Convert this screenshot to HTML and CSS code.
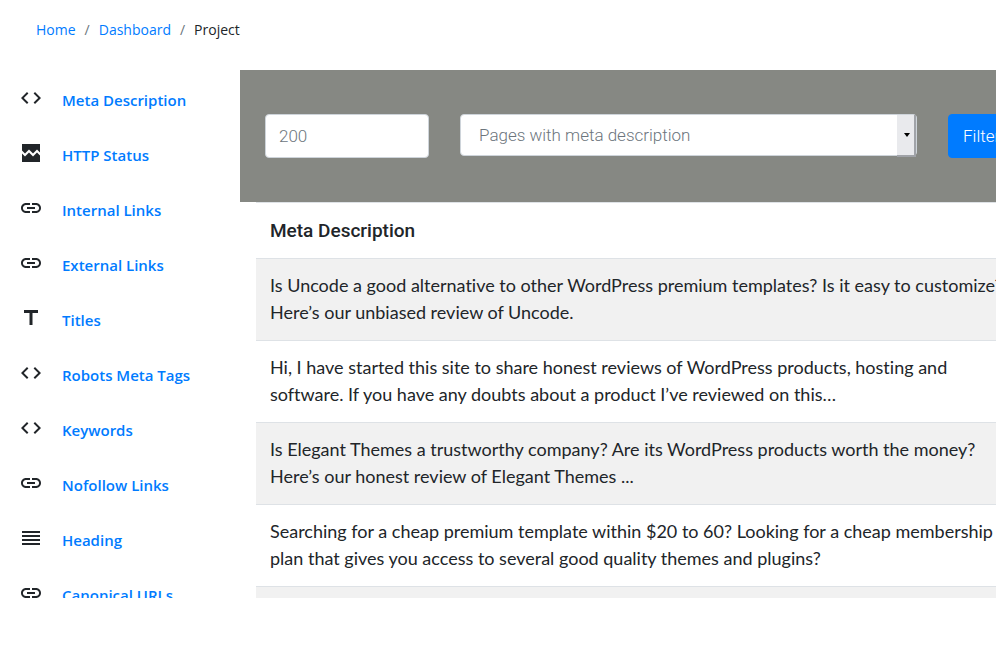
FILE: index.html
```html
<!DOCTYPE html>
<html lang="en">
<head>
    <meta charset="UTF-8">
    <meta name="viewport" content="width=device-width, initial-scale=1.0">
    <title>Project - Meta Description</title>
    <link rel="stylesheet" href="styles.css">
</head>
<body>

<!-- shared icons -->
<svg class="sprite" aria-hidden="true">
    <symbol id="code" viewBox="0 0 24 24"><path d="M9.4 16.6L4.8 12l4.6-4.6L8 6l-6 6 6 6 1.4-1.4zm5.2 0l4.6-4.6-4.6-4.6L16 6l6 6-6 6-1.4-1.4z"/></symbol>
    <symbol id="broken" viewBox="0 0 24 24"><path d="M21 3v8.590l-3-3.010-4 4.010-4-4-4 4-3-3.010V3h18zm-3 8.420l3 3.010V21H3v-8.580l3 2.990 4-4 4 4 4-3.990z"/></symbol>
    <symbol id="link" viewBox="0 0 24 24"><path d="M3.900 12c0-1.710 1.390-3.100 3.100-3.100h4V7H7c-2.760 0-5 2.240-5 5s2.240 5 5 5h4v-1.900H7c-1.710 0-3.100-1.390-3.100-3.100zM8 13h8v-2H8v2zm9-6h-4v1.900h4c1.710 0 3.100 1.390 3.100 3.100s-1.390 3.100-3.100 3.100h-4V17h4c2.760 0 5-2.240 5-5s-2.240-5-5-5z"/></symbol>
    <symbol id="title" viewBox="0 0 24 24"><path d="M5 4v3h5.500v12h3V7H19V4z"/></symbol>
    <symbol id="lines" viewBox="0 0 24 24"><path d="M3 15h18v-2H3v2zm0 4h18v-2H3v2zm0-8h18V9H3v2zm0-6v2h18V5H3z"/></symbol>
</svg>

<div class="page">
    <nav class="breadcrumb" aria-label="Breadcrumb">
        <a href="#">Home</a>
        <span class="sep">/</span>
        <a href="#">Dashboard</a>
        <span class="sep">/</span>
        <span>Project</span>
    </nav>

    <div class="layout">
        <nav class="sidebar" aria-label="Reports">
            <a href="#"><svg><use href="#code"/></svg><span>Meta Description</span></a>
            <a href="#"><svg><use href="#broken"/></svg><span>HTTP Status</span></a>
            <a href="#"><svg><use href="#link"/></svg><span>Internal Links</span></a>
            <a href="#"><svg><use href="#link"/></svg><span>External Links</span></a>
            <a href="#"><svg><use href="#title"/></svg><span>Titles</span></a>
            <a href="#"><svg><use href="#code"/></svg><span>Robots Meta Tags</span></a>
            <a href="#"><svg><use href="#code"/></svg><span>Keywords</span></a>
            <a href="#"><svg><use href="#link"/></svg><span>Nofollow Links</span></a>
            <a href="#"><svg><use href="#lines"/></svg><span>Heading</span></a>
            <a href="#"><svg><use href="#link"/></svg><span>Canonical URLs</span></a>
        </nav>

        <main class="content">
            <form class="filter">
                <input type="text" class="limit" value="200" aria-label="Number of pages">
                <div class="select-wrap">
                    <select aria-label="Page filter">
                        <option>Pages with meta description</option>
                        <option>Pages without meta description</option>
                    </select>
                </div>
                <button type="button">Filter</button>
            </form>

            <table class="results">
                <thead>
                    <tr><th scope="col">Meta Description</th></tr>
                </thead>
                <tbody>
                    <tr><td>Is Uncode a good alternative to other WordPress premium templates? Is it easy to customize?<br>Here’s our unbiased review of Uncode.</td></tr>
                    <tr><td>Hi, I have started this site to share honest reviews of WordPress products, hosting and<br>software. If you have any doubts about a product I’ve reviewed on this…</td></tr>
                    <tr><td>Is Elegant Themes a trustworthy company? Are its WordPress products worth the money?<br>Here’s our honest review of Elegant Themes ...</td></tr>
                    <tr><td>Searching for a cheap premium template within $20 to 60? Looking for a cheap membership<br>plan that gives you access to several good quality themes and plugins?</td></tr>
                    <tr><td>&nbsp;</td></tr>
                </tbody>
            </table>
        </main>
    </div>
</div>

</body>
</html>
```
FILE: styles.css
```css
* {
    box-sizing: border-box;
}

body {
    margin: 0;
    background-color: #fff;
    color: #212529;
    font-family: Lato, sans-serif;
}

a {
    color: #007bff;
    text-decoration: none;
}

.sprite {
    display: none;
}

.page {
    height: calc(100vh - 59px);
    margin-right: 4px;
    overflow: hidden;
}

.breadcrumb {
    display: flex;
    gap: 9px;
    padding: 20px 36px 30px;
    font-family: "Open Sans", sans-serif;
    font-size: 14px;
    line-height: 20px;
}

.breadcrumb .sep {
    color: #6c757d;
}

.layout {
    display: flex;
}

.sidebar {
    flex: 0 0 240px;
    padding: 16px 0 0 19px;
    font-family: "Open Sans", sans-serif;
    font-size: 15px;
    font-weight: 600;
    line-height: 28px;
}

.sidebar a {
    display: flex;
    gap: 19px;
    height: 55px;
}

.sidebar svg {
    width: 24px;
    height: 24px;
    fill: #212529;
}

/* the content is wider than the page and gets cut on the right */
.content {
    flex: 1;
    min-width: 0;
    margin-right: -44px;
}

.filter {
    display: flex;
    gap: 31px;
    padding: 44px 25px;
    background-color: #868883;
}

.filter input,
.filter select,
.filter button {
    height: 44px;
    border: 1px solid #ced4da;
    border-radius: 4px;
    background-color: #fff;
    color: #6c757d;
    font-family: Roboto, sans-serif;
    font-size: 17px;
    font-weight: 300;
}

.filter .limit {
    width: 164px;
    padding: 0 13px;
}

.select-wrap {
    position: relative;
    flex: 1;
}

.filter select {
    display: block;
    width: 100%;
    height: 42px;
    padding: 0 18px;
    appearance: none;
}

.select-wrap::before {
    content: "";
    position: absolute;
    top: 1px;
    right: 1px;
    width: 17px;
    height: 40px;
    border: solid #a0a3a8;
    border-width: 0 2px 2px 0;
    background-color: #e9eaed;
    pointer-events: none;
}

.select-wrap::after {
    content: "";
    position: absolute;
    top: 19px;
    right: 7px;
    border: 3px solid transparent;
    border-top: 4px solid #000;
    pointer-events: none;
}

.filter button {
    width: 67px;
    padding: 0 14px;
    border-color: #007bff;
    background-color: #007bff;
    color: #fff;
    text-align: left;
}

.results {
    width: calc(100% - 16px);
    margin-left: 16px;
    border-collapse: separate;
    border-spacing: 0;
    font-size: 18px;
    font-variant-ligatures: none;
    line-height: 27px;
    white-space: nowrap;
}

.results th {
    padding: 14px;
    border-top: 1px solid #dee2e6;
    font-family: Roboto, sans-serif;
    font-size: 19px;
    font-weight: 500;
    text-align: left;
}

.results td {
    padding: 13px 14px 14px;
    border-top: 1px solid #dee2e6;
}

.results tbody tr:nth-child(odd) {
    background-color: #f1f1f1;
}
```
